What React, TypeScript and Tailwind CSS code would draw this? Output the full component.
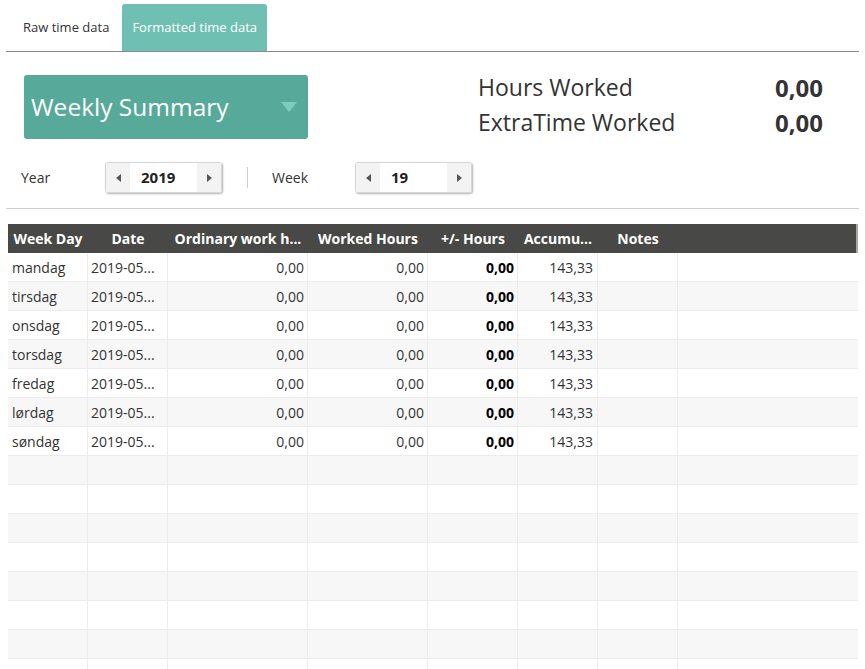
import React from "react";

const days = ["mandag", "tirsdag", "onsdag", "torsdag", "fredag", "lørdag", "søndag"];

const cols = [
  { w: "w-[80px]", label: "Week Day" },
  { w: "w-[80px]", label: "Date" },
  { w: "w-[140px]", label: "Ordinary work h..." },
  { w: "w-[120px]", label: "Worked Hours" },
  { w: "w-[90px]", label: "+/- Hours" },
  { w: "w-[80px]", label: "Accumu..." },
  { w: "w-[80px]", label: "Notes" },
];

function Spinner({ value }: { value: string }) {
  return (
    <div className="flex h-[31px] w-[117px] overflow-hidden rounded-[3px] border border-[#d6d6d6] shadow-[1px_1px_2px_rgba(0,0,0,0.3)]">
      <div className="flex w-[24px] items-center justify-center bg-[#f3f3f3]">
        <svg width="5" height="8" viewBox="0 0 5 8"><path d="M5 0 L0 4 L5 8 Z" fill="#555" /></svg>
      </div>
      <div className="flex flex-1 items-center bg-white pl-[11px] text-[15px] font-bold text-[#222]">{value}</div>
      <div className="flex w-[24px] items-center justify-center bg-[#f3f3f3]">
        <svg width="5" height="8" viewBox="0 0 5 8"><path d="M0 0 L5 4 L0 8 Z" fill="#555" /></svg>
      </div>
    </div>
  );
}

export default function App() {
  const rows = Array.from({ length: 15 }, (_, i) => i);
  return (
    <div className="h-[669px] w-[865px] overflow-hidden bg-white text-[#333]" style={{ fontFamily: '"Open Sans", "Noto Sans", sans-serif' }}>
      {/* Tabs */}
      <div className="mx-[6px] flex h-[52px] items-end border-b border-[#8a8a8a] pl-[17px]">
        <div className="flex h-[47px] items-center pr-[13px] text-[13px] text-[#333]">Raw time data</div>
        <div className="flex h-[47px] items-center rounded-t-[3px] bg-[#6fc0b2] px-[10px] text-[13px] text-white">Formatted time data</div>
      </div>

      {/* Summary */}
      <div className="mt-[23px] flex h-[64px] items-start">
        <div className="ml-[24px] flex h-[64px] w-[284px] items-center justify-between rounded-[3px] bg-[#57a99a] pl-[7px] pr-[11px]">
          <span className="text-[24.5px] text-white">Weekly Summary</span>
          <svg width="16" height="10" viewBox="0 0 16 10"><path d="M0 0 L16 0 L8 10 Z" fill="#7fcbbd" /></svg>
        </div>
        <div className="-mt-[5px] ml-[170px] flex w-[345px] flex-col">
          <div className="flex h-[35px] items-center justify-between text-[23px] text-[#333]">
            <span>Hours Worked</span>
            <span className="text-[24px] font-bold">0,00</span>
          </div>
          <div className="flex h-[35px] items-center justify-between text-[23px] text-[#333]">
            <span>ExtraTime Worked</span>
            <span className="text-[24px] font-bold">0,00</span>
          </div>
        </div>
      </div>

      {/* Controls */}
      <div className="mx-[6px] mt-[22px] flex h-[48px] items-start border-b border-[#cfcfcf] pt-[1px]">
        <div className="flex h-[31px] items-center">
          <span className="ml-[15px] w-[84px] text-[14px]">Year</span>
          <Spinner value="2019" />
          <div className="ml-[25px] h-[21px] border-l border-[#cfcfcf]" />
          <span className="ml-[24px] w-[83px] text-[14px]">Week</span>
          <Spinner value="19" />
        </div>
      </div>

      {/* Table */}
      <div className="ml-[8px] mt-[15px] w-[850px]">
        <div className="flex h-[29px] bg-[#484846] pr-[2px] shadow-[inset_-2px_0_0_#a8a8a8]">
          {cols.map((c) => (
            <div key={c.label} className={`${c.w} flex items-center justify-center whitespace-nowrap text-[14px] font-bold text-white`}>
              {c.label}
            </div>
          ))}
        </div>
        {rows.map((i) => {
          const d = days[i];
          return (
            <div key={i} className={`flex h-[29px] border-b border-[#ececec] ${i % 2 === 1 ? "bg-[#f7f7f7]" : "bg-white"}`}>
              <div className="flex w-[80px] items-center border-r border-[#ececec] pl-[4px] text-[14px]">{d ?? ""}</div>
              <div className="flex w-[80px] items-center border-r border-[#ececec] pl-[3px] text-[14px]">{d ? "2019-05..." : ""}</div>
              <div className="flex w-[140px] items-center justify-end border-r border-[#ececec] pr-[3px] text-[14px]">{d ? "0,00" : ""}</div>
              <div className="flex w-[120px] items-center justify-end border-r border-[#ececec] pr-[3px] text-[14px]">{d ? "0,00" : ""}</div>
              <div className="flex w-[90px] items-center justify-end border-r border-[#ececec] pr-[3px] text-[14px] font-bold text-black">{d ? "0,00" : ""}</div>
              <div className="flex w-[80px] items-center justify-end border-r border-[#ececec] pr-[4px] text-[14px]">{d ? "143,33" : ""}</div>
              <div className="flex w-[80px] items-center border-r border-[#ececec]" />
              <div className="flex-1" />
            </div>
          );
        })}
      </div>
    </div>
  );
}
